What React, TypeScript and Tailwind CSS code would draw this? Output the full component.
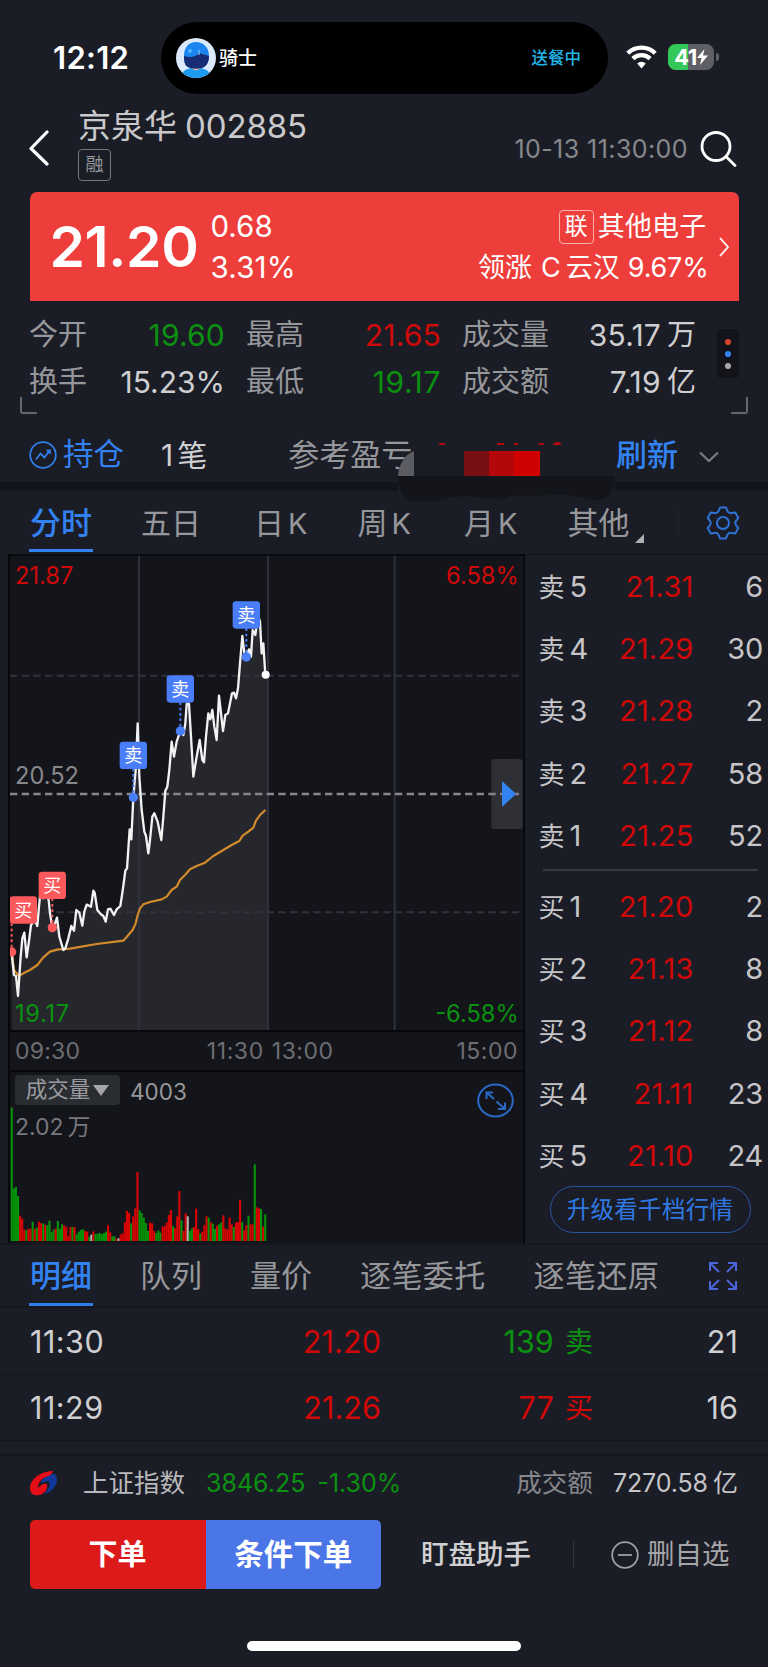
import React from 'react';

type Side = 'sell' | 'buy';

const asks = [
  { label: '5', price: '21.31', qty: 6 },
  { label: '4', price: '21.29', qty: 30 },
  { label: '3', price: '21.28', qty: 2 },
  { label: '2', price: '21.27', qty: 58 },
  { label: '1', price: '21.25', qty: 52 },
];

const bids = [
  { label: '1', price: '21.20', qty: 2 },
  { label: '2', price: '21.13', qty: 8 },
  { label: '3', price: '21.12', qty: 8 },
  { label: '4', price: '21.11', qty: 23 },
  { label: '5', price: '21.10', qty: 24 },
];

const trades = [
  { time: '11:30', price: '21.20', volume: 139, side: 'sell' as Side, count: 21 },
  { time: '11:29', price: '21.26', volume: 77, side: 'buy' as Side, count: 16 },
];

const markers = [
  { x: 70, y: 1080, dotX: 35, dotY: 1206, side: 'buy' as Side },
  { x: 157, y: 1006, dotX: 157, dotY: 1133, side: 'buy' as Side },
  { x: 400, y: 616, dotX: 400, dotY: 742, side: 'sell' as Side },
  { x: 541, y: 417, dotX: 541, dotY: 543, side: 'sell' as Side },
  { x: 739, y: 195, dotX: 739, dotY: 321, side: 'sell' as Side },
];

const priceLine =
  '35,1206 38,1240 42,1275 48,1278 54,1338 58,1280 62,1220 67,1165 73,1148 80,1222 86,1180 93,1125 104,1110 112,1128 117,1070 121,1030 130,1045 137,1030 146,1050 150,1090 157,1133 165,1120 171,1103 178,1160 190,1200 196,1195 205,1165 214,1128 222,1142 229,1080 238,1088 247,1127 253,1085 260,1064 273,1070 280,1022 284,1028 292,1080 302,1092 310,1098 317,1115 324,1078 331,1076 342,1095 350,1078 361,1068 369,1015 376,962 381,955 389,838 394,868 400,742 407,660 413,520 418,680 425,780 433,845 438,858 445,910 450,870 457,800 463,790 473,815 484,870 490,800 496,722 502,710 508,660 515,575 522,620 530,575 541,543 550,555 556,520 560,462 567,462 573,560 580,680 590,620 599,570 607,630 612,637 618,560 625,490 631,508 637,480 643,530 650,570 657,437 669,543 676,495 684,490 696,430 702,428 708,445 714,415 720,340 727,258 733,310 739,320 747,298 753,320 758,240 766,255 774,195 780,215 785,310 790,280 796,374';

const averageLine =
  '35,1206 42,1260 56,1278 70,1270 90,1260 112,1245 130,1222 150,1205 175,1198 210,1196 290,1182 370,1172 385,1155 398,1140 407,1120 413,1095 420,1075 430,1063 450,1056 485,1048 500,1040 515,1020 530,1010 540,990 555,975 570,958 590,948 615,938 640,918 665,903 695,885 718,873 728,857 745,845 760,833 768,812 780,795 796,780';

// g = down, r = up, w = flat
const volumeBars =
  'g400 g158 g162 g135 r76 r67 r34 g33 r37 r37 g58 r36 g40 r58 r53 g53 r48 g47 g61 g27 g34 r37 g60 g37 g50 r47 r42 r14 r42 g42 r42 g20 g28 g33 g35 r30 r28 g13 w19 r29 g21 g22 g24 g20 g24 g28 r47 r26 g14 g14 r7 w8 r20 r22 r56 r90 r84 g53 r74 r98 r207 g92 g84 g70 g54 g30 r55 r53 r30 g24 g32 g25 r43 r45 r55 r78 r93 g44 r38 r74 r150 g62 r30 r83 w74 g30 g38 r42 r97 r36 g22 r28 r48 r74 g70 r56 g52 g36 r46 g50 g56 r77 r38 r34 r70 r50 g42 r55 r57 r124 g57 r32 r48 g76 r50 r50 g230 r101 r97 g96 r43 g80'
    .split(' ')
    .map((item) => ({ kind: item[0], height: Number(item.slice(1)) }));

const barColors: Record<string, string> = { g: '#069209', r: '#d90404', w: '#b8b8b8' };

const StatusBar: React.FC = () => (
  <div className="flex h-[101px] items-start pt-[22px]">
    <div className="flex h-[70px] w-[161px] items-center pl-[53px] text-[31px] font-semibold tracking-[0.300px] text-white">
      12:12
    </div>
    <div className="flex h-[72px] w-[447px] items-center rounded-full bg-black pl-[15px] pr-[27px]">
      <svg className="h-[40px] w-[40px]" viewBox="0 0 40 40">
        <defs>
          <clipPath id="avatar">
            <circle cx="20" cy="20" r="20" />
          </clipPath>
        </defs>
        <g clipPath="url(#avatar)">
          <rect width="40" height="40" fill="#dce8fb" />
          <path d="M14 26h12v8H14z" fill="#f0b79b" />
          <path d="M5 40c0-7 5-9 11-10 2 3 6 3 8 0 7 1 11 4 11 10z" fill="#1b9af0" />
          <path d="M8 18C8 9 13 4 20 4s13 5 13 14c0 3-1 8-4 10-4 3-14 3-18 0-3-2-3-7-3-10z" fill="#1b84ee" />
          <path d="M8 18c6 2 12 1 15-3l10 3c0 4-1 8-4 10.500-4 3-14 3-18 0C8.500 26.500 8 22 8 18z" fill="#162c74" />
          <circle cx="14" cy="13" r="2" fill="#4fb6ff" />
          <path d="M23 12v5" stroke="#7cc4ff" strokeWidth="1.200" />
        </g>
      </svg>
      <span className="ml-[3px] text-[19px] font-medium text-white">骑士</span>
      <span className="ml-auto text-[16.500px] font-medium text-[#20b4e8]">送餐中</span>
    </div>
    <div className="ml-[18px] flex h-[70px] items-center">
      <svg className="h-[24px] w-[31px]" viewBox="0 0 31 24" fill="none" stroke="#fff" strokeWidth="4.400">
        <path d="M1.800 8.200a19.600 19.600 0 0 1 27.400 0" />
        <path d="M6.900 13.600a12.400 12.400 0 0 1 17.200 0" />
        <path d="M15.500 23.500l-4.300-5a6.500 6.500 0 0 1 8.600 0z" fill="#fff" stroke="none" />
      </svg>
      <div className="relative ml-[11px] flex h-[26px] w-[46px] items-center justify-center overflow-hidden rounded-[8px] bg-[#5f6065]">
        <div className="absolute inset-y-0 left-0 w-[20px] bg-[#34c759]" />
        <span className="relative text-[22px] font-bold tracking-[-0.500px] text-white">41</span>
        <svg className="relative h-[16px] w-[11px]" viewBox="0 0 11 16">
          <path d="M7.500 0L0 9h4.500L3 16l8-9.500H6z" fill="#fff" />
        </svg>
      </div>
      <div className="ml-[2px] h-[8px] w-[2.500px] rounded-r-full bg-[#5f6065]" />
    </div>
  </div>
);

const Header: React.FC = () => (
  <div className="flex h-[91px] pl-[28px]">
    <svg className="mt-[29px] h-[36px] w-[22px]" viewBox="0 0 22 36" fill="none" stroke="#fff" strokeWidth="3.200">
      <path d="M19 2L3 18.500 19 34" strokeLinecap="round" strokeLinejoin="round" />
    </svg>
    <div className="ml-[28px] flex flex-col items-start">
      <div className="flex h-[50px] items-center text-[33px] text-[#c9c9cb]">
        <span>京泉华</span>
        <span className="ml-[8px] tracking-[-0.100px]">002885</span>
      </div>
      <div className="-mt-[2px] flex h-[32px] w-[33px] items-center justify-center rounded-[4px] border-[1.500px] border-[#77787d] text-[18px] text-[#96979b]">
        融
      </div>
    </div>
    <div className="ml-auto flex h-[96px] items-center pr-[31px]">
      <span className="text-[25px] tracking-[0.430px] text-[#87888c]">10-13 11:30:00</span>
      <svg className="ml-[12px] h-[36px] w-[37px]" viewBox="0 0 37 36" fill="none" stroke="#fff" strokeWidth="2.800">
        <circle cx="16" cy="15.500" r="14" />
        <path d="M26 25.500l9 9" strokeLinecap="round" />
      </svg>
    </div>
  </div>
);

const QuoteCard: React.FC = () => (
  <div className="mx-[29.500px] flex h-[109px] rounded-t-[7px] bg-[#ee3e3c] text-white">
    <div className="flex w-[181px] items-center pl-[20px] text-[57px] font-semibold tracking-[-0.400px]">21.20</div>
    <div className="flex flex-col pt-[14px] text-[29.500px]">
      <span className="flex h-[41px] items-center">0.68</span>
      <span className="flex h-[41px] items-center tracking-[0.200px]">3.31%</span>
    </div>
    <div className="ml-auto flex flex-col items-end pt-[14px] text-[27px]">
      <div className="flex h-[41px] items-center">
        <span className="mr-[4px] flex h-[34px] w-[35px] items-center justify-center rounded-[4px] border-[1.500px] border-[#f8b0ae] text-[23px]">
          联
        </span>
        <span className="tracking-[0.200px]">其他电子</span>
      </div>
      <div className="-mr-[2px] flex h-[41px] items-center">
        <span>领涨</span>
        <span className="ml-[9px]">C</span>
        <span className="ml-[5px]">云汉</span>
        <span className="ml-[8px] tracking-[-0.200px]">9.67%</span>
      </div>
    </div>
    <svg className="ml-[11px] mr-[9px] mt-[44px] h-[22px] w-[12px]" viewBox="0 0 12 22" fill="none" stroke="#fff" strokeWidth="1.800">
      <path d="M2 2l8 9-8 9" />
    </svg>
  </div>
);

const Stats: React.FC = () => (
  <div className="relative flex h-[119px] pt-[10px] text-[29px] text-[#96979b]">
    <div className="flex w-[225px] flex-col pl-[29px]">
      <div className="flex h-[47px] items-center justify-between">
        今开<span className="text-[30px] tracking-[0.200px] text-[#0b9110]">19.60</span>
      </div>
      <div className="flex h-[47px] items-center justify-between">
        换手<span className="text-[30px] text-[#cfcfd1]">15.23%</span>
      </div>
    </div>
    <div className="ml-[21px] flex w-[195px] flex-col">
      <div className="flex h-[47px] items-center justify-between">
        最高<span className="text-[30px] tracking-[0.200px] text-[#cf0a0a]">21.65</span>
      </div>
      <div className="flex h-[47px] items-center justify-between">
        最低<span className="text-[30px] tracking-[0.600px] text-[#0b9110]">19.17</span>
      </div>
    </div>
    <div className="ml-[21px] flex w-[234px] flex-col">
      <div className="flex h-[47px] items-center justify-between">
        成交量
        <span className="flex text-[#cfcfd1]">
          <span className="mr-[6px] text-[30px] tracking-[0.200px]">35.17</span>万
        </span>
      </div>
      <div className="flex h-[47px] items-center justify-between">
        成交额
        <span className="flex text-[#cfcfd1]">
          <span className="mr-[6px] text-[30px] tracking-[0.300px]">7.19</span>亿
        </span>
      </div>
    </div>
    <div className="ml-[21px] mt-[18px] flex h-[49px] w-[22px] flex-col items-center justify-center gap-[6px] rounded-[4px] bg-[#13141a]">
      <div className="h-[6px] w-[6px] rounded-full bg-[#d64530]" />
      <div className="h-[6px] w-[6px] rounded-full bg-[#3c83f5]" />
      <div className="h-[6px] w-[6px] rounded-full bg-[#aaaaad]" />
    </div>
    <div className="absolute bottom-[6px] left-[20px] h-[17px] w-[17px] rounded-bl-[3px] border-b-2 border-l-2 border-[#66676c]" />
    <div className="absolute bottom-[6px] right-[20px] h-[17px] w-[17px] rounded-br-[3px] border-b-2 border-r-2 border-[#66676c]" />
  </div>
);

const PositionRow: React.FC = () => (
  <>
    <div className="relative flex h-[62px] items-center pl-[29px] pt-[7px] text-[31px]">
      <svg className="h-[28px] w-[28px]" viewBox="0 0 28 28" fill="none" stroke="#2f7de8" strokeWidth="1.800">
        <circle cx="14" cy="14" r="12.800" />
        <path d="M7 18.500l4.500-6 4 4 5-7M17.500 9.500h3.500v3.500" />
      </svg>
      <span className="ml-[6px] text-[30.500px] text-[#3382f2]">持仓</span>
      <span className="ml-[37px] text-[30px] text-[#cfcfd1]">
        1<span className="ml-[4px]">笔</span>
      </span>
      <span className="ml-[81px] text-[#96979b]">参考盈亏</span>
      <span className="ml-auto font-medium text-[#3382f2]">刷新</span>
      <svg className="ml-[20px] mr-[48px] mt-[4px] h-[12px] w-[22px]" viewBox="0 0 22 12" fill="none" stroke="#7b7c81" strokeWidth="2.200">
        <path d="M2 1.500l9 8.500 9-8.500" />
      </svg>
      {/* masked profit figure */}
      <svg className="absolute left-[398px] top-[22px] z-10 h-[62px] w-[218px]" viewBox="0 0 218 62">
        <path d="M15 9h202v46H0V34C1 22 7 12 15 9z" fill="#1b1d26" />
        <path d="M16 9v25H0C1 22 7 12 16 9z" fill="#5c5d62" />
        <path d="M0 34h217c0 14-6 21-14 24-14 2-18-5-42-5l-48 1c-8 6-23 3-34 1-15-2-26 0-33 3-8 2-20 1-34 1C5 56 1 48 0 34z" fill="#14151a" />
        <path d="M40 3l2-2h4l2 2zM99 3v-2h7v2zM116 3v-2h4v2zM140 3l1-2h5v2zM154 3l4-3h3l3 3z" fill="#b20b0d" />
        <rect x="66" y="9" width="26" height="25" fill="#760e13" />
        <rect x="91" y="9" width="26" height="25" fill="#b3070b" />
        <rect x="116" y="9" width="26" height="25" fill="#cf0101" />
      </svg>
    </div>
    <div className="h-[9px] bg-[#14151a]" />
  </>
);

const PeriodTabs: React.FC = () => (
  <div className="flex h-[63px] items-center pl-[29px] text-[30px] text-[#96979b]">
    <div className="flex h-[63px] w-[64px] flex-col items-center justify-between text-[31px] font-medium text-[#3382f2]">
      <span className="flex h-[63px] items-center pt-[4px]">分时</span>
      <div className="mb-[2px] h-[3px] w-full shrink-0 bg-[#3382f2]" />
    </div>
    <span className="ml-[48px]">五日</span>
    <span className="ml-[53px]">日<span className="ml-[4px] text-[29px]">K</span></span>
    <span className="ml-[50px]">周<span className="ml-[4px] text-[29px]">K</span></span>
    <span className="ml-[53px]">月<span className="ml-[4px] text-[29px]">K</span></span>
    <span className="ml-[50px] text-[31px]">其他</span>
    <div className="ml-[6px] mt-[32px] h-0 w-0 border-b-[9px] border-l-[9px] border-b-[#b0b0b3] border-l-transparent" />
    <div className="ml-auto mr-[27px] h-[26px] w-px bg-[#22242c]" />
    <svg className="mr-[28px] h-[34px] w-[34px]" viewBox="0 0 34 34" fill="none" stroke="#2d72d6" strokeWidth="2" strokeLinejoin="round">
      <path d="M14 1.500h6l1.500 3.800q1.400 2.200 4 1.800l3.800-.600 3 5.400-2.300 3q-1.400 2.100 0 4.200l2.300 3-3 5.400-3.800-.600q-2.600-.400-4 1.800L20 32.500h-6l-1.500-3.800q-1.400-2.200-4-1.800l-3.800.600-3-5.400 2.300-3q1.400-2.100 0-4.200l-2.300-3 3-5.400 3.800.600q2.600.400 4-1.800z" />
      <circle cx="17" cy="17" r="6" />
    </svg>
  </div>
);

const PriceChart: React.FC = () => (
  <svg className="h-[478px] w-[517px]" viewBox="24 12 1551 1434">
    <rect x="24" y="12" width="1551" height="1434" fill="#14151a" />
    <polygon points={`35,1444 ${priceLine} 806,374 806,1444`} fill="#26272c" />
    <path d="M417 16V1444M804 16V1444M1184 16V1444" stroke="#2f303b" strokeWidth="6" />
    <path d="M30 377H1566M30 1087H1566" stroke="#31323c" strokeWidth="6" strokeDasharray="22 13" />
    <path d="M30 732H1566" stroke="#87888c" strokeWidth="7" strokeDasharray="22 13" />
    <polyline points={averageLine} fill="none" stroke="#d48b2c" strokeWidth="6.500" strokeLinejoin="round" />
    <polyline points={priceLine} fill="none" stroke="#f2f2f2" strokeWidth="7" strokeLinejoin="round" />
    <circle cx="797" cy="374" r="12" fill="#fff" />
    {markers.map((m) => {
      const color = m.side === 'sell' ? '#4a7df8' : '#fb595c';
      return (
        <g key={`${m.x}-${m.y}`}>
          <path d={`M${m.dotX} ${m.y + 40}V${m.dotY}`} stroke={color} strokeWidth="6" strokeDasharray="8 8" />
          <circle cx={m.dotX} cy={m.dotY} r="14" fill={color} />
          <rect x={m.x - 41} y={m.y - 41} width="82" height="82" rx="10" fill={color} />
          <text x={m.x} y={m.y + 21} fontSize="54" textAnchor="middle" fill="#fff">
            {m.side === 'sell' ? '卖' : '买'}
          </text>
        </g>
      );
    })}
    <g fontSize="71">
      <text x="45" y="103" fill="#cf0a0a">21.87</text>
      <text x="45" y="703" fill="#87888c">20.52</text>
      <text x="45" y="1415" letterSpacing="2" fill="#0b9110">19.17</text>
      <text x="1556" y="103" textAnchor="end" fill="#cf0a0a">6.58%</text>
      <text x="1556" y="1415" textAnchor="end" fill="#0b9110">-6.58%</text>
    </g>
    <rect x="1474" y="627" width="94" height="210" rx="10" fill="#77787d" fillOpacity="0.28" />
    <path d="M1506 693v78l42-39z" fill="#3382f2" />
    <path d="M27 1443V14H1573V1443z" fill="none" stroke="#07080c" strokeWidth="6" />
  </svg>
);

const VolumePanel: React.FC = () => (
  <div className="relative h-[173px] border-x-2 border-t-2 border-[#07080c] pl-[5px] pt-[3px]">
    <div className="flex h-[30px] items-start">
      <div className="flex h-[30px] w-[105px] items-center justify-center gap-[3px] rounded-[4px] bg-[#292c31] text-[21.500px] text-[#9b9ca0]">
        成交量
        <svg className="h-[11px] w-[16px]" viewBox="0 0 16 11">
          <path d="M0 0h16L8 11z" fill="#a5a5a8" />
        </svg>
      </div>
      <span className="ml-[10px] mt-[2px] flex h-[30px] items-center text-[22.500px] text-[#96979b]">4003</span>
      <svg className="ml-auto mr-[9px] mt-[8px] h-[35px] w-[37px]" viewBox="0 0 37 35" fill="none" stroke="#2a68c6" strokeWidth="2">
        <ellipse cx="18.500" cy="17.500" rx="17.300" ry="16" />
        <path d="M9.500 16V9.500H16M9.500 9.500l7.500 6.500M19.500 18.500l8 7M21 26h7v-6.500" />
      </svg>
    </div>
    <div className="mt-[3px] flex h-[38px] items-center text-[23px] text-[#77787d]">
      2.02<span className="ml-[4px]">万</span>
    </div>
    <svg className="absolute bottom-[2px] left-0 h-[135px] w-[260px]" viewBox="0 0 260 135">
      {volumeBars.map((bar, i) => (
        <rect
          key={i}
          x={0.7 + i * 2.095}
          y={135 - bar.height / 3}
          width="2.1"
          height={bar.height / 3}
          fill={barColors[bar.kind]}
        />
      ))}
    </svg>
  </div>
);

const OrderRow: React.FC<{ side: Side; label: string; price: string; qty: number }> = ({ side, label, price, qty }) => (
  <div className="flex h-[62.400px] items-center text-[29px] text-[#c6c6c9]">
    <span className="w-[59px] text-[26px]">
      {side === 'sell' ? '卖' : '买'}
      <span className="ml-[5px] text-[29px]">{label}</span>
    </span>
    <span className="w-[96px] text-right tracking-[0.200px] text-[#d10808]">{price}</span>
    <span className="ml-auto tracking-[-0.200px]">{qty}</span>
  </div>
);

const OrderBook: React.FC = () => (
  <div className="flex flex-1 flex-col border-t border-[#13141a] pl-[13.500px] pr-[5px]">
    {asks.map((row) => (
      <OrderRow key={row.label} side="sell" {...row} />
    ))}
    <div className="ml-[4px] mt-[2px] h-[2px] w-[215px] shrink-0 bg-[#383a42]" />
    <div className="h-[4px] shrink-0" />
    {bids.map((row) => (
      <OrderRow key={row.label} side="buy" {...row} />
    ))}
    <div className="-mt-[1px] ml-[11px] flex h-[47px] w-[201px] shrink-0 items-center justify-center rounded-full border-[1.500px] border-[#27549f] text-[23.500px] tracking-[0.300px] text-[#3079e4]">
      升级看千档行情
    </div>
  </div>
);

const DetailTabs: React.FC = () => (
  <div className="flex h-[65px] items-center border-b-2 border-t-2 border-[#16171e] pl-[29px] text-[31px] text-[#96979b]">
    <div className="flex h-[61px] w-[64px] flex-col items-center justify-between font-medium text-[#3382f2]">
      <span className="flex h-[61px] items-center pt-[3px]">明细</span>
      <div className="h-[3px] w-full shrink-0 bg-[#2f7de8]" />
    </div>
    <span className="ml-[47px] pb-[1px]">队列</span>
    <span className="ml-[48px] pb-[1px]">量价</span>
    <span className="ml-[48px] pb-[1px] tracking-[0.400px]">逐笔委托</span>
    <span className="ml-[48px] pb-[1px] tracking-[0.400px]">逐笔还原</span>
    <svg className="ml-auto mr-[31px] h-[28px] w-[28px]" viewBox="0 0 28 28" fill="none" stroke="#4b66dd" strokeWidth="2">
      <path d="M1 9V1h8M1 1l9 9M19 1h8v8M27 1l-9 9M1 19v8h8M1 27l9-9M19 27h8v-8M27 27l-9-9" />
    </svg>
  </div>
);

const TradeList: React.FC = () => (
  <>
    {trades.map((trade) => (
      <div
        key={trade.time}
        className="flex h-[66.500px] items-center border-b border-[#15161c] px-[30px] pt-[2px] text-[30.500px] tracking-[0.100px] text-[#cfcfd1]"
      >
        <span className="w-[180px] tracking-[0.500px]">{trade.time}</span>
        <span className="w-[171px] text-right text-[#d10808]">{trade.price}</span>
        <span
          className={`flex w-[212px] items-center justify-end ${trade.side === 'sell' ? 'text-[#0b9110]' : 'text-[#d10808]'}`}
        >
          {trade.volume}
          <span className="ml-[11px] text-[28px]">{trade.side === 'sell' ? '卖' : '买'}</span>
        </span>
        <span className="ml-auto">{trade.count}</span>
      </div>
    ))}
    <div className="h-[15px] border-b-2 border-[#15161c]" />
  </>
);

const IndexBar: React.FC = () => (
  <div className="flex h-[56px] items-center px-[30px] pb-[2px] text-[25px]">
    <svg className="h-[25px] w-[28px]" viewBox="0 0 28 25">
      <path d="M25 3c5 7 0 17-11 20 5-5 7-9 5-12-2-2-6 0-8 2 1-7 7-10 14-10z" fill="#0f3a9b" />
      <path d="M23 0C10 0 0 9 0 17c0 6 4 8 9 7 6-1 9-6 8-11-4-1-6 1-9 4 0-5 3-9 8-11 4-1 6-3 7-6z" fill="#e40d18" />
    </svg>
    <span className="ml-[25px] text-[25.500px] text-[#b9b9bc]">上证指数</span>
    <span className="ml-[21px] text-[#0b9110]">3846.25</span>
    <span className="ml-[12px] text-[#0b9110]">-1.30%</span>
    <span className="ml-auto text-[25.500px] text-[#87888c]">成交额</span>
    <span className="ml-[20px] tracking-[-0.100px] text-[#c6c6c9]">7270.58</span>
    <span className="ml-[5px] text-[#c6c6c9]">亿</span>
  </div>
);

const ActionBar: React.FC = () => (
  <div className="mt-[8px] flex h-[69px] items-center pl-[29.500px]">
    <div className="flex h-[69px] w-[351.500px] overflow-hidden rounded-[5px] text-[29px] font-bold text-white">
      <button className="w-[176px] bg-[#dc1a19]">下单</button>
      <button className="flex-1 bg-[#4a76e8] text-[29.500px]">条件下单</button>
    </div>
    <span className="ml-[40px] text-[27.500px] font-medium text-[#cfcfd1]">盯盘助手</span>
    <div className="ml-[42px] h-[27px] w-px bg-[#33353d]" />
    <svg className="ml-[37px] h-[28px] w-[28px]" viewBox="0 0 28 28" fill="none" stroke="#a0a0a3" strokeWidth="1.800">
      <circle cx="14" cy="14" r="12.800" />
      <path d="M7 14h14" />
    </svg>
    <span className="ml-[8px] text-[27.500px] text-[#a5a5a8]">删自选</span>
  </div>
);

const App: React.FC = () => {
  return (
    <div className="h-[1667px] w-[768px] overflow-hidden whitespace-nowrap bg-[#1b1d26] font-['Inter','Noto_Sans_CJK_SC',sans-serif] leading-none">
      <StatusBar />
      <Header />
      <QuoteCard />
      <Stats />
      <PositionRow />
      <PeriodTabs />
      <div className="flex h-[689px]">
        <div className="ml-[8px] flex w-[517px] flex-col bg-[#14151a]">
          <PriceChart />
          <div className="flex h-[38px] items-center border-x-2 border-[#07080c] pl-[5px] pr-[5px] text-[23px] text-[#6d6e73]">
            <span className="tracking-[0.200px]">09:30</span>
            <span className="ml-auto mr-[8px] tracking-[0.600px]">11:30</span>
            <span className="mr-[123px] tracking-[0.500px]">13:00</span>
            <span className="tracking-[0.500px]">15:00</span>
          </div>
          <VolumePanel />
        </div>
        <OrderBook />
      </div>
      <DetailTabs />
      <TradeList />
      <IndexBar />
      <ActionBar />
      <div className="mx-auto mt-[52px] h-[10px] w-[274px] rounded-full bg-white" />
    </div>
  );
};

export default App;
